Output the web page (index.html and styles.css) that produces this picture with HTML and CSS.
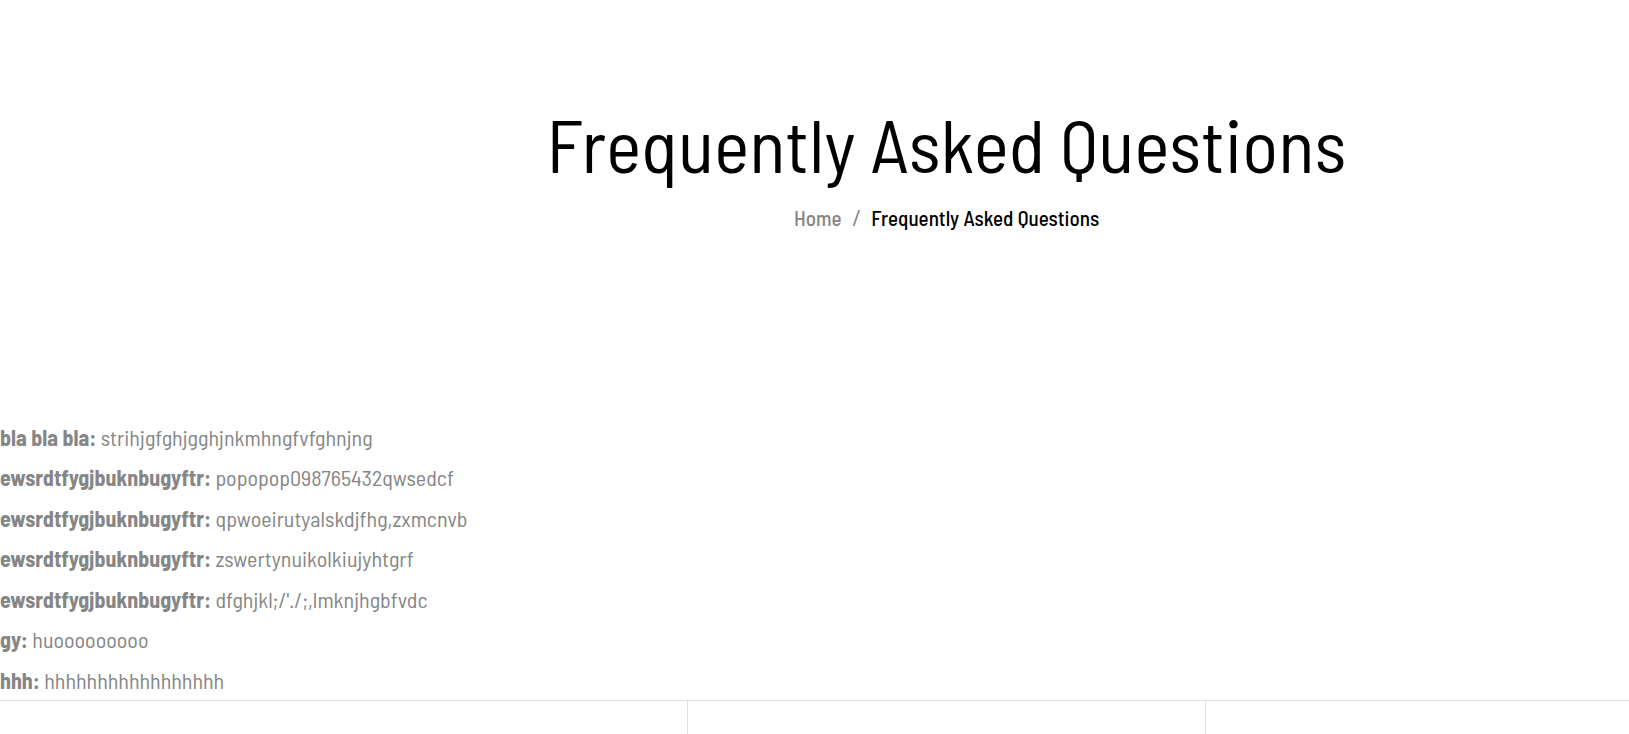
FILE: index.html
```html
<!DOCTYPE html>
<html lang="en">
<head>
<meta charset="utf-8">
<meta name="viewport" content="width=device-width, initial-scale=1">
<title>Frequently Asked Questions</title>
<link rel="stylesheet" href="styles.css">
</head>
<body>
<header class="page-header">
  <h1 class="page-title">Frequently Asked Questions</h1>
  <nav class="breadcrumb" aria-label="Breadcrumb">
    <a class="breadcrumb-link" href="#">Home</a>
    <span class="breadcrumb-separator">/</span>
    <span aria-current="page">Frequently Asked Questions</span>
  </nav>
</header>
<main class="faq">
  <p class="faq-item"><strong>bla bla bla:</strong> strihjgfghjgghjnkmhngfvfghnjng</p>
  <p class="faq-item"><strong>ewsrdtfygjbuknbugyftr:</strong> popopop098765432qwsedcf</p>
  <p class="faq-item"><strong>ewsrdtfygjbuknbugyftr:</strong> qpwoeirutyalskdjfhg,zxmcnvb</p>
  <p class="faq-item"><strong>ewsrdtfygjbuknbugyftr:</strong> zswertynuikolkiujyhtgrf</p>
  <p class="faq-item"><strong>ewsrdtfygjbuknbugyftr:</strong> dfghjkl;/'./;,lmknjhgbfvdc</p>
  <p class="faq-item"><strong>gy:</strong> huooooooooo</p>
  <p class="faq-item"><strong>hhh:</strong> hhhhhhhhhhhhhhhhh</p>
</main>
<footer class="page-footer">
  <div class="footer-column"></div>
  <div class="footer-column"></div>
  <div class="footer-column"></div>
</footer>
</body>
</html>
```
FILE: styles.css
```css
body {
  margin: 0;
  background: #fff;
  color: #868686;
  font-family: "Barlow Semi Condensed", "Liberation Sans Narrow", "Roboto Condensed", Roboto, sans-serif;
  font-size: 22px;
  line-height: 1.84;
}

.page-header {
  display: flex;
  flex-direction: column;
  align-items: center;
  padding: 99px 0 185px 264px;
  color: #000;
}

.page-title {
  margin: 0;
  font-size: 75px;
  font-weight: 400;
  line-height: 88px;
}

.breadcrumb {
  display: flex;
  gap: 11px;
  margin-top: 17px;
  font-size: 21px;
  font-weight: 500;
  line-height: 28px;
}

.breadcrumb-link,
.breadcrumb-separator {
  color: #868686;
  text-decoration: none;
}

.breadcrumb-separator {
  font-family: "Open Sans", sans-serif;
}

.faq-item {
  margin: 0;
}

.page-footer {
  display: grid;
  grid-template-columns: 1fr 518px 1fr;
  padding-left: 262px;
  border-top: 1px solid #e3e3e3;
}

.footer-column {
  min-height: 33px;
}

.footer-column + .footer-column {
  border-left: 1px solid #e3e3e3;
}
```
